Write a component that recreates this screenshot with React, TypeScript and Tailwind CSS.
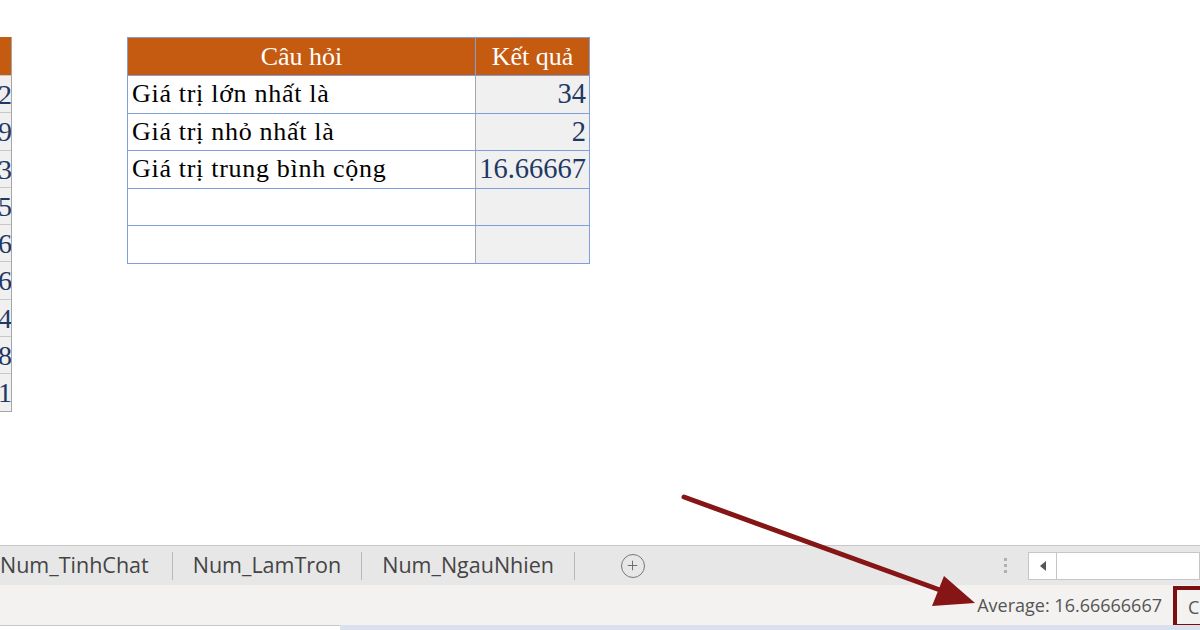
import { Plus } from 'lucide-react';

const sideValues = ['12', '29', '23', '15', '16', '26', '34', '18', '11'];

const questions = [
  { q: 'Giá trị lớn nhất là', a: '34' },
  { q: 'Giá trị nhỏ nhất là', a: '2' },
  { q: 'Giá trị trung bình cộng', a: '16.66667' },
  { q: '', a: '' },
  { q: '', a: '' },
];

const tabs = ['Num_TinhChat', 'Num_LamTron', 'Num_NgauNhien'];

export default function App() {
  return (
    <div className="relative flex h-[630px] w-[1200px] flex-col overflow-hidden bg-white">
      {/* sheet area */}
      <div className="flex h-[545px] items-start pt-[37px] font-['Liberation_Serif',serif] text-[26px]">
        <div className="w-[12px] overflow-hidden border-r border-[#a6a6a6]">
          <div className="h-[38px] bg-[#c55a11]" />
          {sideValues.map((v, i) => (
            <div key={i} className="flex h-[37.3px] justify-end border-t border-[#c8c8c8] bg-[#f0f0f0] text-[28px] leading-[37px] text-[#1f3864]">
              <span className="-mr-[1px]">{v}</span>
            </div>
          ))}
          <div className="border-b border-[#a6a6a6]" />
        </div>

        <div className="ml-[115px] w-[463px] border border-[#7f9fdc]">
          <div className="flex h-[37px] bg-[#c55a11] leading-[37px] text-white">
            <div className="w-[348px] border-r border-[#7f9fdc] text-center">Câu hỏi</div>
            <div className="flex-1 text-center">Kết quả</div>
          </div>
          {questions.map((r, i) => (
            <div key={i} className="flex h-[37.6px] border-t border-[#7f9fdc] leading-[36px]">
              <div className="w-[348px] border-r border-[#a6a6a6] pl-[4px] tracking-[0.7px] text-black">{r.q}</div>
              <div className="flex-1 bg-[#f0f0f0] pr-[3px] text-right text-[28.5px] text-[#1f3864]">{r.a}</div>
            </div>
          ))}
        </div>
      </div>

      {/* sheet tabs */}
      <div className="flex h-[40px] items-center border-t border-[#c6c6c6] bg-[#e7e7e7] font-['Open_Sans',sans-serif] text-[21.5px] text-[#444]">
        {tabs.map((t, i) => (
          <div key={t} className="flex items-center">
            <span className={i === 0 ? 'pr-[23px]' : 'px-[20px]'}>{t}</span>
            <span className="h-[28px] w-px bg-[#b8b8b8]" />
          </div>
        ))}
        <div className="ml-[46px] flex h-[24px] w-[24px] items-center justify-center rounded-full border border-[#777]">
          <Plus className="h-[15px] w-[15px] text-[#666]" strokeWidth={1.5} />
        </div>
        <div className="ml-auto flex items-center">
          <div className="flex flex-col gap-[3px] pr-[21px]">
            <span className="h-[3px] w-[3px] bg-[#b0b0b0]" />
            <span className="h-[3px] w-[3px] bg-[#b0b0b0]" />
            <span className="h-[3px] w-[3px] bg-[#b0b0b0]" />
          </div>
          <div className="flex h-[28px] w-[172px] border border-[#c6c6c6] bg-white">
            <div className="flex w-[28px] items-center justify-center border-r border-[#c6c6c6]">
              <span className="h-0 w-0 border-y-[5px] border-r-[6px] border-y-transparent border-r-[#555]" />
            </div>
          </div>
        </div>
      </div>

      {/* status bar */}
      <div className="flex h-[40px] items-center justify-end bg-[#f3f2f1] font-['Open_Sans',sans-serif] text-[18px] text-[#555]">
        <span className="mr-[11px]">Average: 16.66666667</span>
        <div className="mt-[4px] flex h-[42px] w-[27px] items-center border-[4px] border-r-0 border-[#7b0f0f] pl-[11px] text-[#555]">C</div>
      </div>

      <div className="flex h-[5px]">
        <div className="w-[340px] border-t border-[#c8c8c8] bg-white" />
        <div className="flex-1 bg-[#dae0ee]" />
      </div>

      {/* annotation arrow */}
      <svg className="pointer-events-none absolute left-0 top-0" width="1200" height="630">
        <line x1="684" y1="497" x2="940" y2="590" stroke="#861515" strokeWidth="5" strokeLinecap="round" />
        <polygon points="975,603 932,606 944,576" fill="#861515" />
      </svg>
    </div>
  );
}
